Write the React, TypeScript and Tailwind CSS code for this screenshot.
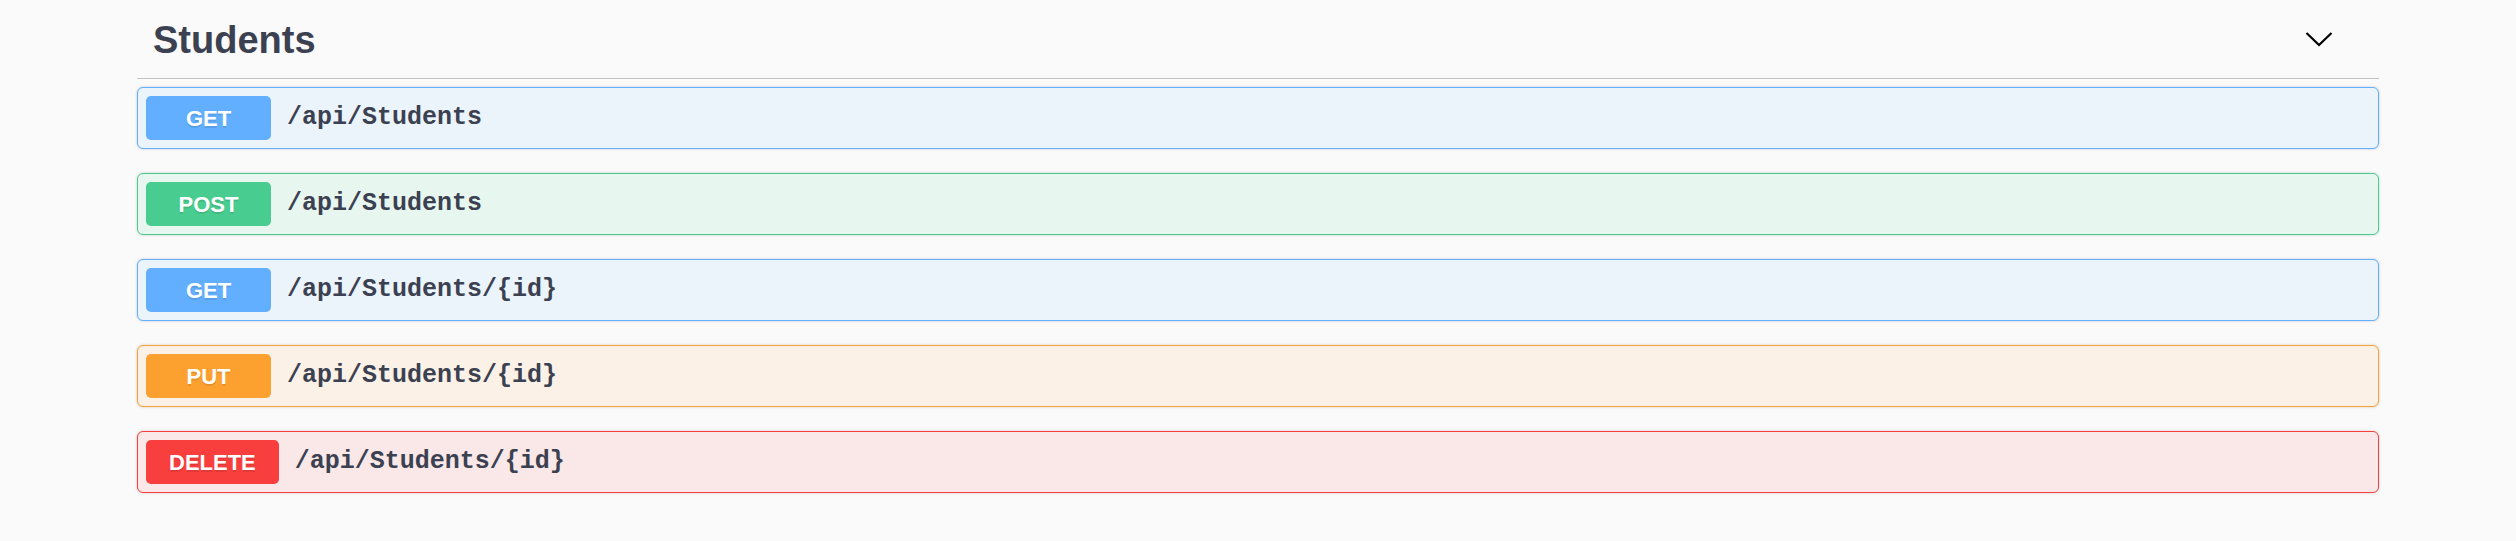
const endpoints = [
  { method: 'GET', path: '/api/Students', badge: 'bg-[#61affe]', row: 'bg-[#ebf3fb] border-[#61affe]' },
  { method: 'POST', path: '/api/Students', badge: 'bg-[#49cc90]', row: 'bg-[#e8f6f0] border-[#49cc90]' },
  { method: 'GET', path: '/api/Students/{id}', badge: 'bg-[#61affe]', row: 'bg-[#ebf3fb] border-[#61affe]' },
  { method: 'PUT', path: '/api/Students/{id}', badge: 'bg-[#fca130]', row: 'bg-[#fbf1e6] border-[#fca130]' },
  { method: 'DELETE', path: '/api/Students/{id}', badge: 'bg-[#f93e3e]', row: 'bg-[#fae7e7] border-[#f93e3e]' },
];

function Chevron() {
  return (
    <svg width="28" height="16" viewBox="0 0 28 16" fill="none" stroke="#000" strokeWidth="2.2">
      <polyline points="1.5,2 14,14 26.5,2" />
    </svg>
  );
}

export default function App() {
  return (
    <div className="min-h-screen w-full bg-[#fafafa] font-['Liberation_Sans',Arial,sans-serif]">
      <div className="mx-auto w-[2242px]">
        <div className="flex h-[79px] items-center justify-between border-b border-[#c1c3c7] pl-[16px] pr-[46px]">
          <h3 className="pt-[2px] text-[38px] leading-[38px] font-bold text-[#3b4151]">Students</h3>
          <Chevron />
        </div>
        <div className="mt-[8px] flex flex-col gap-[24px]">
          {endpoints.map((e, i) => (
            <div
              key={i}
              className={`flex items-center rounded-[6px] border p-[8px] shadow-[0_0_3px_rgba(0,0,0,0.19)] ${e.row}`}
            >
              <span
                className={`flex h-[44px] min-w-[125px] items-center justify-center rounded-[5px] px-[23px] text-[22px] font-bold text-white [text-shadow:0_1.5px_0_rgba(0,0,0,0.1)] ${e.badge}`}
              >
                {e.method}
              </span>
              <span className="pl-[16px] font-['Liberation_Mono','Courier_New',monospace] text-[25px] font-bold text-[#3b4151]">
                {e.path}
              </span>
            </div>
          ))}
        </div>
      </div>
    </div>
  );
}
